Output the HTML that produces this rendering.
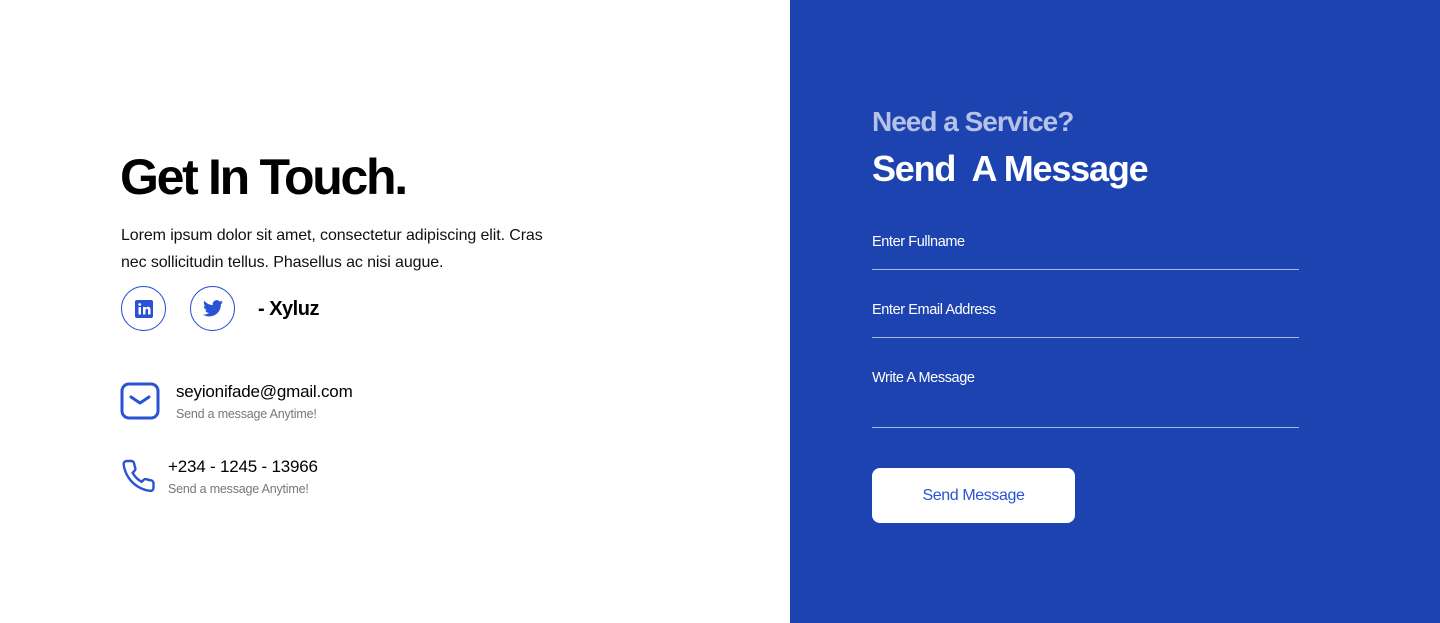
<!DOCTYPE html>
<html><head><style>
*{margin:0;padding:0;box-sizing:border-box}
body{width:1440px;height:623px;overflow:hidden;font-family:"Liberation Sans",sans-serif;background:#fff;position:relative}
.abs{position:absolute;white-space:nowrap}
.right{position:absolute;left:790px;top:0;width:650px;height:623px;background:#1d43b0}
.line{position:absolute;left:872px;width:427px;height:1px;background:#a9b7e6}
.lbl{position:absolute;left:872px;color:#fff;font-size:14.5px;letter-spacing:-0.4px}
.circ{position:absolute;top:286px;width:45px;height:45px;border:1.3px solid #2a52d6;border-radius:50%;display:flex;align-items:center;justify-content:center}
</style></head><body>
<div class="abs" style="left:120px;top:148px;font-size:50px;font-weight:bold;letter-spacing:-2.3px;color:#000">Get In Touch.</div>
<div class="abs" style="left:121px;top:222px;font-size:16px;line-height:27px;color:#111;white-space:normal;width:440px;letter-spacing:-0.1px">Lorem ipsum dolor sit amet, consectetur adipiscing elit. Cras nec sollicitudin tellus. Phasellus ac nisi augue.</div>
<div class="circ" style="left:121px"><svg width="18" height="18" viewBox="0 0 18 18"><rect width="18" height="18" rx="2" fill="#2a52d6"/><rect x="3.5" y="7" width="2.5" height="7.5" fill="#fff"/><circle cx="4.75" cy="4.5" r="1.4" fill="#fff"/><path d="M8 7h2.4v1.2c.5-.9 1.5-1.4 2.6-1.4 2 0 2.5 1.3 2.5 3v4.7H13v-4.2c0-1-.2-1.6-1.1-1.6-1 0-1.4.7-1.4 1.7v4.1H8z" fill="#fff"/></svg></div>
<div class="circ" style="left:190px"><svg width="20" height="17" viewBox="0 0 24 20"><path fill="#2a52d6" d="M24 2.4a9.8 9.8 0 0 1-2.8.8A4.9 4.9 0 0 0 23.3.4a9.9 9.9 0 0 1-3.1 1.2A4.9 4.9 0 0 0 11.8 6 14 14 0 0 1 1.7.9a4.9 4.9 0 0 0 1.5 6.6A4.9 4.9 0 0 1 1 6.9V7a4.9 4.9 0 0 0 3.9 4.8 4.9 4.9 0 0 1-2.2.1 4.9 4.9 0 0 0 4.6 3.4A9.9 9.9 0 0 1 0 17.3 14 14 0 0 0 7.5 19.5c9.1 0 14-7.5 14-14v-.6A10 10 0 0 0 24 2.4z"/></svg></div>
<div class="abs" style="left:258px;top:298px;font-size:20px;font-weight:bold;color:#000;letter-spacing:-0.5px">- Xyluz</div>
<svg class="abs" style="left:120px;top:382px" width="40" height="38" viewBox="0 0 40 38"><rect x="2" y="2" width="36" height="34" rx="7" fill="none" stroke="#2a52d6" stroke-width="3"/><path d="M11 15l9 6 9-6" fill="none" stroke="#2a52d6" stroke-width="3" stroke-linecap="round" stroke-linejoin="round"/></svg>
<div class="abs" style="left:176px;top:382px;font-size:17px;color:#000;letter-spacing:-0.2px">seyionifade@gmail.com</div>
<div class="abs" style="left:176px;top:407px;font-size:12.5px;color:#777;letter-spacing:-0.2px">Send a message Anytime!</div>
<svg class="abs" style="left:120px;top:458px" width="37" height="36" viewBox="0 0 24 24"><path d="M22 16.9v3a2 2 0 0 1-2.2 2 19.8 19.8 0 0 1-8.6-3.1 19.5 19.5 0 0 1-6-6A19.8 19.8 0 0 1 2.1 4.2 2 2 0 0 1 4.1 2h3a2 2 0 0 1 2 1.7c.1 1 .4 1.9.7 2.8a2 2 0 0 1-.5 2.1L8.1 9.9a16 16 0 0 0 6 6l1.3-1.3a2 2 0 0 1 2.1-.4c.9.3 1.8.6 2.8.7a2 2 0 0 1 1.7 2z" fill="none" stroke="#2a52d6" stroke-width="1.6"/></svg>
<div class="abs" style="left:168px;top:457px;font-size:17px;color:#000;letter-spacing:-0.2px">+234 - 1245 - 13966</div>
<div class="abs" style="left:168px;top:482px;font-size:12.5px;color:#777;letter-spacing:-0.2px">Send a message Anytime!</div>

<div class="right"></div>
<div class="abs" style="left:872px;top:106px;font-size:28px;font-weight:bold;color:#b5c1e6;letter-spacing:-1px">Need a Service?</div>
<div class="abs" style="left:872px;top:148px;font-size:36px;font-weight:bold;color:#fff;letter-spacing:-1.2px">Send&nbsp; A Message</div>
<div class="lbl" style="top:234px">Enter Fullname</div>
<div class="line" style="top:269px"></div>
<div class="lbl" style="top:302px">Enter Email Address</div>
<div class="line" style="top:337px"></div>
<div class="lbl" style="top:370px">Write A Message</div>
<div class="line" style="top:427px"></div>
<div class="abs" style="left:872px;top:468px;width:203px;height:55px;background:#fff;border-radius:8px;color:#2a52d6;font-size:16px;display:flex;align-items:center;justify-content:center;letter-spacing:-0.4px">Send Message</div>
</body></html>
